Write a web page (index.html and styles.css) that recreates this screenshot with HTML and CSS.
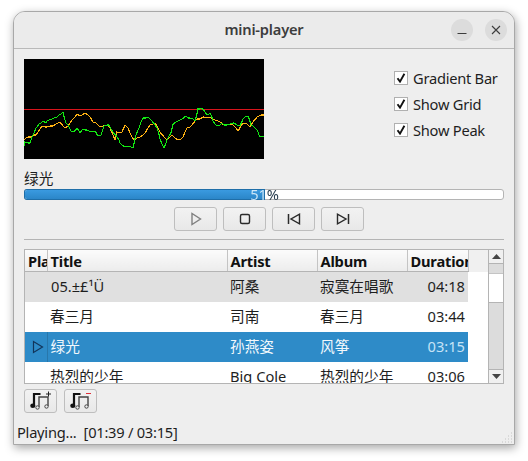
FILE: index.html
```html
<!DOCTYPE html>
<html lang="en">
  <head>
    <meta charset="UTF-8" />
    <title>mini-player</title>
    <link rel="stylesheet" href="styles.css">
  </head>
  <body>
    <div class="window">
      <header class="titlebar">
        <span class="title">mini-player</span>
        <div class="win-buttons">
          <button class="win-btn">
            <svg width="10" height="10" viewBox="0 0 10 10"><path d="M0.500 8.500h9" stroke="#3d3d3d" stroke-width="1" fill="none" /></svg>
          </button>
          <button class="win-btn">
            <svg width="10" height="10" viewBox="0 0 10 10"><path d="M1 1l8 8M9 1l-8 8" stroke="#3d3d3d" stroke-width="1.100" fill="none" /></svg>
          </button>
        </div>
      </header>

      <main class="content">
        <section class="top">
          <svg class="scope" width="240" height="100" viewBox="0 0 240 100">
            <rect width="240" height="100" fill="#000" />
            <path d="M0 50.500h240" stroke="#d8141c" stroke-width="1" />
            <polyline class="wave-orange" points="0,81 2,79 4,78 7,78 9,76 12,76 14,73 16,70 18,67 21,68 23,68 26,67 29,67 32,65 36,63 39,67 41,69 44,67 46,64 48,61 51,58 53,55 56,57 58,56 61,54 64,56 66,58 69,63 72,64 76,68 79,67 81,66 84,67 86,69 89,76 91,81 93,73 96,74 98,73 101,66 104,69 106,74 108,78 110,81 113,79 116,78 119,76 121,74 124,69 126,66 129,65 131,64 134,69 136,73 140,78 143,81 146,78 148,76 151,79 154,81 157,80 159,78 161,73 163,69 166,68 168,66 171,62 173,60 176,60 179,58 183,59 186,58 189,60 191,61 194,62 196,63 200,66 203,66 206,65 209,66 212,69 214,72 217,67 219,64 223,65 226,68 229,63 233,58 237,56 240,56" />
            <polyline class="wave-green" points="0,87 1,83 4,84 6,84 8,78 10,74 12,69 13,68 15,65 17,64 19,62 22,64 23,62 25,61 28,60 30,59 33,58 35,56 37,55 39,53 41,61 42,64 44,66 46,70 47,72 50,73 53,69 55,72 56,74 58,71 59,70 61,71 63,71 65,72 68,73 71,72 74,77 77,76 79,70 80,67 83,66 85,66 87,70 89,73 93,78 95,81 96,84 98,86 101,88 104,87 107,88 109,89 111,80 112,76 114,71 115,69 117,63 119,59 122,59 124,58 126,60 128,62 131,66 133,69 135,75 136,80 138,85 140,89 142,84 143,81 145,77 147,74 148,70 149,65 152,63 154,62 158,60 162,57 164,59 166,59 169,60 171,62 173,55 174,50 176,50 178,49 181,53 183,56 185,55 186,54 188,58 189,62 191,65 193,67 196,66 198,64 200,66 203,66 206,65 210,64 213,66 216,67 219,60 221,58 224,57 226,62 227,66 229,67 231,69 233,71 234,73 235,76 236,78 238,77 240,78" />
          </svg>
          <div class="options">
            <label class="option"><span class="check"><svg width="10" height="10" viewBox="0 0 10 10"><path d="M1.500 5.200L4 8.600L8.400 0.800" stroke="#111" stroke-width="1.900" fill="none" /></svg></span>Gradient Bar</label>
            <label class="option"><span class="check"><svg width="10" height="10" viewBox="0 0 10 10"><path d="M1.500 5.200L4 8.600L8.400 0.800" stroke="#111" stroke-width="1.900" fill="none" /></svg></span>Show Grid</label>
            <label class="option"><span class="check"><svg width="10" height="10" viewBox="0 0 10 10"><path d="M1.500 5.200L4 8.600L8.400 0.800" stroke="#111" stroke-width="1.900" fill="none" /></svg></span>Show Peak</label>
          </div>
        </section>

        <div class="song">绿光</div>
        <div class="progress">
          <div class="progress-fill" style="width: 50%"></div>
          <span class="progress-text">51%</span>
        </div>

        <div class="controls">
          <button class="btn">
            <svg width="14" height="14" viewBox="0 0 14 14"><path d="M3 1.500v11l8.500-5.500z" stroke="#808080" stroke-width="1.400" fill="none" /></svg>
          </button>
          <button class="btn">
            <svg width="14" height="14" viewBox="0 0 14 14"><rect x="2.500" y="2.500" width="9" height="9" rx="1.500" stroke="#2b2b2b" stroke-width="1.400" fill="none" /></svg>
          </button>
          <button class="btn">
            <svg width="14" height="14" viewBox="0 0 14 14"><path d="M1.500 2v10" stroke="#2b2b2b" stroke-width="1.500" /><path d="M12.500 2.200v9.600L4 7z" stroke="#2b2b2b" stroke-width="1.400" fill="none" /></svg>
          </button>
          <button class="btn">
            <svg width="14" height="14" viewBox="0 0 14 14"><path d="M12.500 2v10" stroke="#2b2b2b" stroke-width="1.500" /><path d="M1.500 2.200v9.600L10 7z" stroke="#2b2b2b" stroke-width="1.400" fill="none" /></svg>
          </button>
        </div>

        <hr class="sep" />

        <div class="list">
          <div class="list-view">
            <table class="tracks">
              <colgroup>
                <col class="col-play" />
                <col class="col-title" />
                <col class="col-artist" />
                <col class="col-album" />
                <col class="col-dur" />
                <col />
              </colgroup>
              <thead>
                <tr>
                  <th>Play</th>
                  <th>Title</th>
                  <th>Artist</th>
                  <th>Album</th>
                  <th>Duration</th>
                  <th class="filler"></th>
                </tr>
              </thead>
              <tbody>
                <tr class="hover">
                  <td></td>
                  <td class="first-title">05.±£¹Ü</td>
                  <td>阿桑</td>
                  <td>寂寞在唱歌</td>
                  <td class="dur">04:18</td>
                  <td class="blank"></td>
                </tr>
                <tr>
                  <td></td>
                  <td>春三月</td>
                  <td>司南</td>
                  <td>春三月</td>
                  <td class="dur">03:44</td>
                  <td class="blank"></td>
                </tr>
                <tr class="selected">
                  <td class="play-cell">
                    <svg class="play-mark" width="12" height="14" viewBox="0 0 12 14"><path d="M1.500 1.500v11l9-5.500z" stroke="#12355a" stroke-width="1.200" fill="none" /></svg>
                  </td>
                  <td>绿光</td>
                  <td>孙燕姿</td>
                  <td>风筝</td>
                  <td class="dur">03:15</td>
                  <td class="blank"></td>
                </tr>
                <tr>
                  <td></td>
                  <td>热烈的少年</td>
                  <td>Big Cole</td>
                  <td>热烈的少年</td>
                  <td class="dur">03:06</td>
                  <td class="blank"></td>
                </tr>
              </tbody>
            </table>
          </div>
          <div class="scrollbar">
            <div class="arrow"><svg width="9" height="5" viewBox="0 0 9 5"><path d="M4.500 0L9 5H0z" fill="#444" /></svg></div>
            <div class="track track-short"></div>
            <div class="thumb"></div>
            <div class="track"></div>
            <div class="arrow arrow-down"><svg width="9" height="5" viewBox="0 0 9 5"><path d="M0 0h9L4.500 5z" fill="#444" /></svg></div>
          </div>
        </div>

        <div class="list-actions">
          <button class="btn btn-small">
            <svg width="24" height="20" viewBox="0 0 24 20">
              <path d="M5 14V3H11.500" stroke="#111" stroke-width="2.200" fill="none" />
              <ellipse cx="3.800" cy="14.800" rx="2.600" ry="2.200" fill="#111" />
              <path d="M10 16V6H19V15" stroke="#444" stroke-width="1.400" fill="none" />
              <circle cx="8.500" cy="16.500" r="1.700" stroke="#444" fill="#eee" />
              <circle cx="17.500" cy="15.500" r="1.700" stroke="#444" fill="#eee" />
              <path d="M17 3h5M19.500 0.500v5" stroke="#222" stroke-width="1" />
            </svg>
          </button>
          <button class="btn btn-small">
            <svg width="24" height="20" viewBox="0 0 24 20">
              <path d="M5 14V3H11.500" stroke="#111" stroke-width="2.200" fill="none" />
              <ellipse cx="3.800" cy="14.800" rx="2.600" ry="2.200" fill="#111" />
              <path d="M10 16V6H19V15" stroke="#444" stroke-width="1.400" fill="none" />
              <circle cx="8.500" cy="16.500" r="1.700" stroke="#444" fill="#eee" />
              <circle cx="17.500" cy="15.500" r="1.700" stroke="#444" fill="#eee" />
              <path d="M17 2.500h5" stroke="#e0303a" stroke-width="1" />
            </svg>
          </button>
        </div>

        <footer class="status">Playing...&nbsp; [01:39 / 03:15]</footer>
      </main>
      <svg class="grip" width="11" height="11" viewBox="0 0 11 11">
        <path d="M9 1h1M6 4h1M9 4h1M3 7h1M6 7h1M9 7h1M0 10h1M3 10h1M6 10h1M9 10h1" stroke="#c4c4c4" stroke-width="1" />
      </svg>
    </div>
  </body>
</html>
```

FILE: styles.css
```css
html,
body {
  height: 100%;
}
body {
  margin: 0;
  padding: 11px 0 0 13px;
  box-sizing: border-box;
  background: #fff;
  overflow: hidden;
  font-family: "Noto Sans", "Noto Sans CJK SC", sans-serif;
  font-size: 14.67px;
  color: #1e1e1e;
}
button {
  font: inherit;
  padding: 0;
}

.window {
  position: relative;
  width: 502px;
  height: 434px;
  box-sizing: border-box;
  display: flex;
  flex-direction: column;
  background: #eeeeee;
  border: 1px solid #a8a8a8;
  border-radius: 12px 12px 0 0;
  box-shadow: 1px 3px 10px rgba(0, 0, 0, 0.35);
}

.titlebar {
  position: relative;
  height: 36px;
  flex: none;
  display: flex;
  align-items: center;
  justify-content: center;
  background: #ebebeb;
  border-bottom: 1px solid #b9b9b9;
  border-radius: 11px 11px 0 0;
}
.title {
  font-weight: 600;
  color: #3d3d3d;
  letter-spacing: -0.2px;
  margin-bottom: 2px;
}
.win-buttons {
  position: absolute;
  right: 7px;
  top: 7px;
  display: flex;
  gap: 12px;
}
.win-btn {
  width: 22px;
  height: 22px;
  border: 0;
  border-radius: 50%;
  background: #dcdcdc;
  display: flex;
  align-items: center;
  justify-content: center;
}

.content {
  flex: 1;
  display: flex;
  flex-direction: column;
  padding: 10px 10px 0;
  min-height: 0;
}

.top {
  display: flex;
  justify-content: space-between;
  height: 100px;
  flex: none;
}
.scope {
  display: block;
}
.wave-orange,
.wave-green {
  fill: none;
  stroke-width: 1.2;
  shape-rendering: crispEdges;
}
.wave-orange {
  stroke: #ffb312;
}
.wave-green {
  stroke: #12e812;
}
.options {
  width: 110px;
  padding-top: 9px;
  display: flex;
  flex-direction: column;
  gap: 6px;
}
.option {
  height: 20px;
  display: flex;
  align-items: center;
  gap: 5px;
  white-space: nowrap;
  letter-spacing: -0.25px;
}
.check {
  width: 12px;
  height: 12px;
  border: 1px solid #b0b0b0;
  background: #fff;
  display: flex;
  align-items: center;
  justify-content: center;
}

.song {
  margin-top: 9px;
  height: 21px;
  line-height: 20px;
}
.progress {
  position: relative;
  height: 9px;
  border: 1px solid #b4b4b4;
  border-radius: 3px;
  background: #fff;
}
.progress-fill {
  height: 100%;
  background: linear-gradient(#3a9ae0, #2b86c8);
  border-radius: 2px 0 0 2px;
  box-shadow: 0 0 0 1px #1f6ea8;
}
.progress-text {
  position: absolute;
  left: 225px;
  top: -3px;
  width: 29px;
  text-align: center;
  font-size: 14.67px;
  letter-spacing: -0.2px;
  line-height: 14px;
  background: linear-gradient(90deg, #cfe8f8 0 17px, #22384a 17px);
  -webkit-background-clip: text;
  background-clip: text;
  color: transparent;
}

.controls {
  margin-top: 7px;
  padding-left: 150px;
  display: flex;
  gap: 6px;
}
.btn {
  width: 43px;
  height: 24px;
  box-sizing: border-box;
  border: 1px solid #bebebe;
  border-radius: 3px;
  background: linear-gradient(#f2f2f2, #e8e8e8);
  display: flex;
  align-items: center;
  justify-content: center;
}

.sep {
  width: 100%;
  margin: 8px 0 9px;
  border: 0;
  border-top: 1px solid #b4b4b4;
}

.list {
  height: 135px;
  flex: none;
  box-sizing: border-box;
  display: flex;
  border: 1px solid #b4b4b4;
  background: #fff;
}
.list-view {
  flex: 1;
  min-width: 0;
  overflow: hidden;
}
.tracks {
  table-layout: fixed;
  width: 465px;
  border-collapse: collapse;
}
.col-play {
  width: 22px;
}
.col-title {
  width: 180px;
}
.col-artist,
.col-album {
  width: 90px;
}
.col-dur {
  width: 61px;
}
.tracks th {
  height: 21px;
  padding: 0 0 0 3px;
  text-align: left;
  font-size: 14.67px;
  font-weight: 700;
  letter-spacing: -0.2px;
  color: #111;
  white-space: nowrap;
  overflow: hidden;
  background: linear-gradient(#fbfbfb, #ececec);
  border-right: 1px solid #c4c4c4;
  border-bottom: 1px solid #b4b4b4;
}
.tracks th.filler {
  background: #f0f0f0;
  border-right: 0;
  border-bottom: 0;
}
.tracks td {
  box-sizing: border-box;
  height: 30px;
  padding: 0 0 2px 3px;
  white-space: nowrap;
  overflow: hidden;
}
.tracks .first-title {
  padding-left: 4px;
}
.tracks .dur {
  text-align: right;
  padding: 0 3px 2px 0;
}
.hover td {
  background: #e0e0e0;
}
.selected td {
  background: #2e8bc8;
  color: #f2f8fc;
}
.selected .dur {
  color: #c6e3f6;
}
.selected .play-cell {
  padding: 0 0 0 7px;
  border-right: 1px solid #2877ab;
}
.tracks td.blank {
  background: #fff;
}
.play-mark {
  display: block;
}

.scrollbar {
  width: 14px;
  flex: none;
  display: flex;
  flex-direction: column;
  border-left: 1px solid #b4b4b4;
  background: #dcdcdc;
}
.arrow {
  height: 13px;
  flex: none;
  background: #f0f0f0;
  border-bottom: 1px solid #b4b4b4;
  display: flex;
  align-items: center;
  justify-content: center;
}
.arrow-down {
  border-bottom: 0;
  border-top: 1px solid #b4b4b4;
}
.track {
  flex: 1;
}
.track-short {
  flex: none;
  height: 9px;
  border-bottom: 1px solid #c4c4c4;
}
.thumb {
  height: 28px;
  flex: none;
  background: #fff;
  border-bottom: 1px solid #b4b4b4;
}

.list-actions {
  margin-top: 5px;
  display: flex;
  gap: 7px;
}
.btn-small {
  width: 33px;
}

.status {
  margin-top: 8px;
  margin-left: -7px;
  height: 22px;
  line-height: 22px;
  letter-spacing: -0.25px;
}

.grip {
  position: absolute;
  right: 1px;
  bottom: 1px;
}
```
